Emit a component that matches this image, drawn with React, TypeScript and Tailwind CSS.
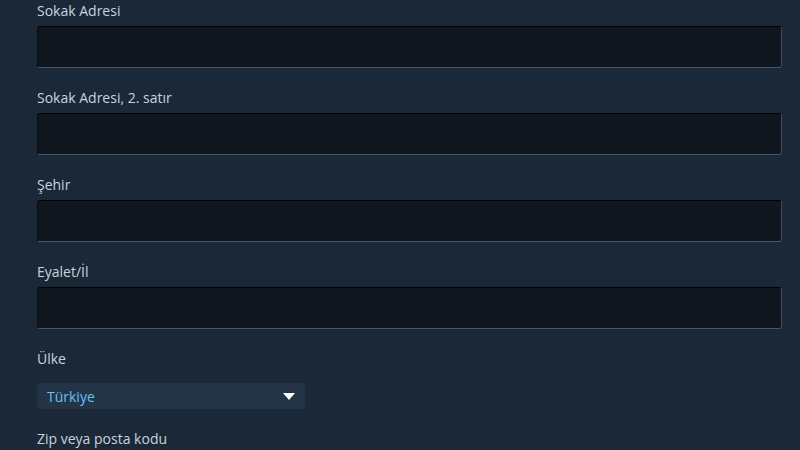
import React from "react";

function Field({ label }: { label: string }) {
  return (
    <div className="mb-[20px]">
      <div className="h-[20px] leading-[20px] text-[14px] text-[#c6d4df] mb-[5px]">{label}</div>
      <div className="h-[42px] w-[745px] rounded-[3px] bg-[#10161e] border border-t-[#000000] border-l-[#0a0d12] border-r-[#3d4a5c] border-b-[#4a5568]" />
    </div>
  );
}

export default function App() {
  return (
    <div
      className="w-[800px] h-[450px] overflow-hidden bg-[#1b2838] pl-[37px] pt-[1px]"
      style={{ fontFamily: '"Open Sans", "Liberation Sans", Arial, sans-serif' }}
    >
      <Field label="Sokak Adresi" />
      <Field label="Sokak Adresi, 2. satır" />
      <Field label="Şehir" />
      <Field label="Eyalet/İl" />
      <div className="mb-[20px]">
        <div className="h-[20px] leading-[20px] text-[14px] text-[#c6d4df] mb-[14px]">Ülke</div>
        <div className="h-[26px] w-[268px] rounded-[3px] bg-[#243447] flex items-center justify-between pl-[10px] pr-[10px]">
          <span className="text-[14px] text-[#66c0f4]">Türkiye</span>
          <svg width="12" height="7" viewBox="0 0 12 7">
            <path d="M0 0 L12 0 L6 7 Z" fill="#ffffff" />
          </svg>
        </div>
      </div>
      <div className="h-[20px] leading-[20px] text-[14px] text-[#c6d4df]">Zip veya posta kodu</div>
    </div>
  );
}
